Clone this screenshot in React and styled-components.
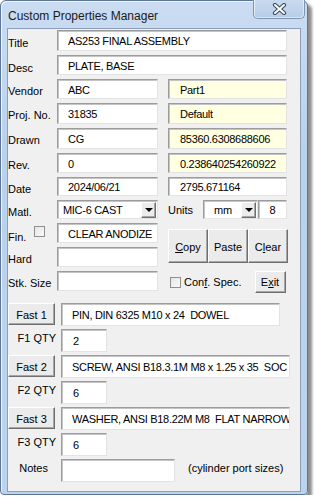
import React from 'react';
import styled, { createGlobalStyle } from 'styled-components';

const GlobalStyle = createGlobalStyle`
  html, body {
    margin: 0;
    padding: 0;
    background: #fff;
  }
  body {
    font-family: "Liberation Sans", Arial, sans-serif;
    font-size: 11px;
    color: #000;
  }
`;

const Window = styled.div`
  width: 308px;
  height: 495px;
  box-sizing: border-box;
  border: 1px solid #5f7796;
  border-radius: 6px 6px 4px 4px;
  background: linear-gradient(180deg, #cadcf1 0%, #bad1ec 30%, #bdd3ed 100%);
  box-shadow: 4px 4px 3px rgba(0, 0, 0, 0.45), inset 1px 1px 0 rgba(255, 255, 255, 0.7);
  padding: 0 6px;
  display: flex;
  flex-direction: column;
`;

const TitleBar = styled.div`
  height: 27px;
  display: flex;
  justify-content: space-between;
  align-items: flex-start;
`;

const Caption = styled.div`
  font-size: 12px;
  color: #1a1a1a;
  margin: 8px 0 0 1px;
`;

const CloseButton = styled.div`
  width: 52px;
  height: 19px;
  margin: -1px -4px 0 0;
  box-sizing: border-box;
  border: 1px solid #7f95b3;
  border-top: none;
  border-radius: 0 0 5px 5px;
  background: linear-gradient(180deg, #c9daf0 0%, #b6cce7 100%);
  box-shadow: inset 1px 0 0 rgba(255, 255, 255, 0.6), inset -1px -1px 0 rgba(255, 255, 255, 0.5);
  display: flex;
  align-items: center;
  justify-content: center;
`;

const Client = styled.div`
  height: 464px;
  box-sizing: border-box;
  border: 1px solid #8a9fbb;
  background: #f0f0f0;
  padding-top: 1px;
`;

const Upper = styled.div`
  display: grid;
  grid-template-columns: 49px 101px 129px;
  grid-template-rows: 21px 20px 20px 21px 21px 20px 19px 19px 20px 20px 20px;
  row-gap: 4px;
`;

const Label = styled.div`
  grid-column: 1;
  padding-top: ${p => p.$top ?? 7}px;
  line-height: 13px;
  white-space: nowrap;
  display: flex;
  align-items: flex-start;
`;

const TextBox = styled.div`
  box-sizing: border-box;
  height: ${p => (p.$h ? `${p.$h}px` : '100%')};
  width: ${p => (p.$w ? `${p.$w}px` : 'auto')};
  margin-left: ${p => p.$ml || 0}px;
  background: ${p => (p.$yellow ? '#ffffe1' : '#fff')};
  border: 1px solid;
  border-color: #9c9c9c #e3e3e3 #e3e3e3 #9c9c9c;
  box-shadow: inset 1px 1px 0 #c4c4c4;
  padding-left: ${p => p.$pl ?? 10}px;
  padding-top: 1px;
  display: flex;
  align-items: center;
  justify-content: ${p => (p.$center ? 'center' : 'flex-start')};
  white-space: pre;
  letter-spacing: -0.3px;
  overflow: hidden;
  flex-shrink: 0;
`;

const WideBox = styled(TextBox)`
  grid-column: 2 / span 2;
`;

const RightCell = styled.div`
  grid-column: 3;
  padding-left: 10px;
  display: flex;
  align-items: ${p => p.$align || 'stretch'};
  min-width: 0;
`;

const Combo = styled.div`
  box-sizing: border-box;
  width: ${p => p.$w}px;
  height: 19px;
  background: #fff;
  border: 1px solid;
  border-color: #9c9c9c #e3e3e3 #e3e3e3 #9c9c9c;
  box-shadow: inset 1px 1px 0 #c4c4c4;
  display: flex;
  align-items: center;
  justify-content: space-between;
  padding: 0 1px 0 ${p => p.$pl}px;
  letter-spacing: -0.3px;
`;

const DropButton = styled.div`
  width: 15px;
  height: 16px;
  box-sizing: border-box;
  background: #ececec;
  border: 1px solid;
  border-color: #fff #6f6f6f #6f6f6f #fff;
  box-shadow: inset -1px -1px 0 #a6a6a6;
  display: flex;
  align-items: center;
  justify-content: center;
`;

const Arrow = styled.div`
  width: 0;
  height: 0;
  border-left: 4px solid transparent;
  border-right: 4px solid transparent;
  border-top: 4px solid #000;
`;

const Check = styled.div`
  width: 11px;
  height: 11px;
  box-sizing: border-box;
  background: linear-gradient(135deg, #e6e6e6 0%, #fafafa 100%);
  border: 1px solid #8e8f8f;
  flex-shrink: 0;
  margin-left: ${p => p.$ml || 0}px;
  margin-top: ${p => p.$mt || 0}px;
`;

const InlineText = styled.span`
  margin-left: ${p => p.$ml || 0}px;
  margin-right: ${p => p.$mr || 0}px;
  padding-top: ${p => p.$pt || 0}px;
  white-space: nowrap;
`;

const Button = styled.div`
  box-sizing: border-box;
  width: ${p => p.$w}px;
  height: ${p => p.$h}px;
  background: #ebebeb;
  border: 1px solid;
  border-color: #fff #6f6f6f #6f6f6f #fff;
  box-shadow: inset -1px -1px 0 #a6a6a6;
  display: flex;
  align-items: center;
  justify-content: center;
  padding-top: ${p => p.$pt || 0}px;
  flex-shrink: 0;
  margin-left: ${p => p.$ml || 0}px;
  white-space: nowrap;
`;

const ButtonGroup = styled.div`
  grid-column: 3;
  grid-row: 9 / span 2;
  margin: 6px 0 0 10px;
  height: 34px;
  display: flex;
`;

const Lower = styled.div`
  margin-top: 12px;
  display: flex;
  flex-direction: column;
  gap: 4px;
`;

const Row = styled.div`
  display: flex;
  align-items: flex-start;
  height: 22px;
`;

const SideLabel = styled.div`
  width: 48px;
  box-sizing: border-box;
  text-align: right;
  padding: 3px ${p => p.$pr || 0}px 0 0;
  margin-right: 5px;
  white-space: nowrap;
`;

const Note = styled.div`
  margin: 3px 0 0 13px;
  white-space: nowrap;
`;

const CloseGlyph = () => (
  <svg width="15" height="12" viewBox="0 0 15 12">
    <path d="M3 2 L12 10 M12 2 L3 10" stroke="#3d4b5e" strokeWidth="4.2" strokeLinecap="round" />
    <path d="M3 2 L12 10 M12 2 L3 10" stroke="#fff" strokeWidth="2" strokeLinecap="round" />
  </svg>
);

const fasts = [
  { id: 1, text: 'PIN, DIN 6325 M10 x 24  DOWEL', w: 219, qty: '2' },
  { id: 2, text: 'SCREW, ANSI B18.3.1M M8 x 1.25 x 35  SOC', w: 229, qty: '6' },
  { id: 3, text: 'WASHER, ANSI B18.22M M8  FLAT NARROW', w: 229, qty: '6' },
];

const rightFields = [
  { label: 'Vendor', left: 'ABC', right: 'Part1', yellow: true },
  { label: 'Proj. No.', left: '31835', right: 'Default', yellow: true },
  { label: 'Drawn', left: 'CG', right: '85360.6308688606', yellow: true },
  { label: 'Rev.', left: '0', right: '0.238640254260922', yellow: true },
  { label: 'Date', left: '2024/06/21', right: '2795.671164', yellow: false },
];

export default function App() {
  return (
    <>
      <GlobalStyle />
      <Window>
        <TitleBar>
          <Caption>Custom Properties Manager</Caption>
          <CloseButton>
            <CloseGlyph />
          </CloseButton>
        </TitleBar>
        <Client>
          <Upper>
            <Label>Title</Label>
            <WideBox>AS253 FINAL ASSEMBLY</WideBox>

            <Label>Desc</Label>
            <WideBox>PLATE, BASE</WideBox>

            {rightFields.map(f => (
              <React.Fragment key={f.label}>
                <Label $top={6}>{f.label}</Label>
                <TextBox>{f.left}</TextBox>
                <RightCell>
                  <TextBox $w={119} $yellow={f.yellow} $pl={11}>{f.right}</TextBox>
                </RightCell>
              </React.Fragment>
            ))}

            <Label $top={6}>Matl.</Label>
            <Combo $w={101} $pl={5}>
              <span>MIC-6 CAST</span>
              <DropButton><Arrow /></DropButton>
            </Combo>
            <RightCell $align="flex-start">
              <InlineText $pt={4} $mr={10}>Units</InlineText>
              <Combo $w={57} $pl={10}>
                <span>mm</span>
                <DropButton><Arrow /></DropButton>
              </Combo>
              <TextBox $w={29} $h={19} $pl={0} $center>8</TextBox>
            </RightCell>

            <Label $top={8}>
              Fin.
              <Check $ml={8} $mt={-5} />
            </Label>
            <TextBox>CLEAR ANODIZE</TextBox>
            <ButtonGroup>
              <Button $w={40} $h={34} $pt={2}><span><u>C</u>opy</span></Button>
              <Button $w={40} $h={34} $pt={2}>Paste</Button>
              <Button $w={40} $h={34} $pt={2}><span>C<u>l</u>ear</span></Button>
            </ButtonGroup>

            <Label $top={6}>Hard</Label>
            <TextBox />

            <Label $top={6}>Stk. Size</Label>
            <TextBox />
            <RightCell $align="flex-start">
              <Check $ml={2} $mt={6} />
              <InlineText $ml={3} $pt={5}>Con<u>f</u>. Spec.</InlineText>
              <Button $w={31} $h={22} $ml={13}><span>E<u>x</u>it</span></Button>
            </RightCell>
          </Upper>

          <Lower>
            {fasts.map(f => (
              <React.Fragment key={f.id}>
                <Row>
                  <Button $w={47} $h={22} $pt={2}>Fast {f.id}</Button>
                  <TextBox $w={f.w} $h={23} $ml={6}>{f.text}</TextBox>
                </Row>
                <Row>
                  <SideLabel>F{f.id} QTY</SideLabel>
                  <TextBox $w={46} $h={23} $pl={11}>{f.qty}</TextBox>
                </Row>
              </React.Fragment>
            ))}
            <Row>
              <SideLabel $pr={8}>Notes</SideLabel>
              <TextBox $w={114} $h={23} />
              <Note>(cylinder port sizes)</Note>
            </Row>
          </Lower>
        </Client>
      </Window>
    </>
  );
}
